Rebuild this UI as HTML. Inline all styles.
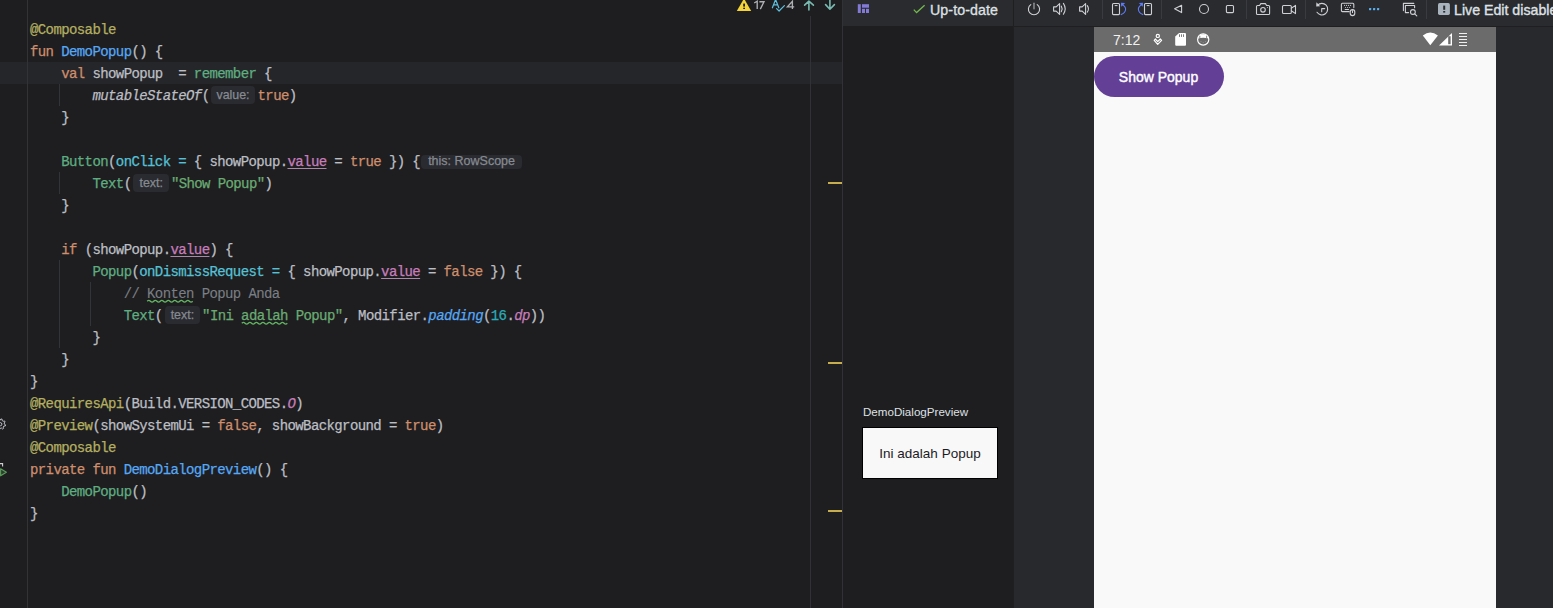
<!DOCTYPE html>
<html><head><meta charset="utf-8">
<style>
*{margin:0;padding:0;box-sizing:border-box}
html,body{width:1553px;height:608px;overflow:hidden;background:#1e1e20}
body{position:relative;font-family:"Liberation Sans",sans-serif}
.abs{position:absolute}
#editor{left:0;top:0;width:842px;height:608px;background:#1e1e20}
.ln{position:absolute;left:30px;height:22px;line-height:22px;font-family:"Liberation Mono",monospace;font-size:14px;letter-spacing:-0.6px;color:#bcbec4;white-space:pre;-webkit-text-stroke:0.25px currentColor}

.an{color:#b3ae60}
.kw{color:#cf8e6d}
.fd{color:#56a8f5}
.cf{color:#5fae82}
.it{font-style:italic}
.na{color:#56c1d6}
.pr{color:#c77dbb;text-decoration:underline;text-decoration-color:#a88aa8;text-underline-offset:2px;text-decoration-thickness:1px}
.st{color:#6aab73}
.cm{color:#7a7e85;-webkit-text-stroke:0.1px #7a7e85}
.nu{color:#2aacb8}
.pu{color:#c77dbb}
.hint{display:inline-block;vertical-align:top;margin-top:1px;height:18px;line-height:18px;border-radius:4px;background:#2a2b30;color:#868a91;font-family:"Liberation Sans",sans-serif;font-size:12.4px;letter-spacing:0;padding:0 5px;margin-left:2px;margin-right:3px}
.hint2{height:14px;line-height:13px;margin-top:4px;font-size:12.5px;padding:0 7px;margin-left:1px}
.wavy{text-decoration:underline wavy #5fa65f;text-underline-offset:3px;text-decoration-thickness:1px}
</style></head><body>
<div id="editor" class="abs">
  <!-- current line highlight -->
  <div class="abs" style="left:0;top:62px;width:842px;height:22px;background:#252629"></div>
  <!-- gutter line -->
  <div class="abs" style="left:27px;top:0;width:1px;height:608px;background:#313335"></div>
  <!-- right margin guide -->
  <div class="abs" style="left:810px;top:16px;width:1px;height:592px;background:#313236"></div>
  <div class="abs" style="left:842px;top:0;width:1px;height:608px;background:#313236"></div>
  <!-- indent guides -->
  <div class="abs" style="left:59px;top:84px;width:1px;height:22px;background:#313438"></div>
  <div class="abs" style="left:59px;top:172px;width:1px;height:22px;background:#313438"></div>
  <div class="abs" style="left:59px;top:260px;width:1px;height:88px;background:#313438"></div>
  <div class="abs" style="left:90px;top:282px;width:1px;height:44px;background:#313438"></div>
  <!-- markers -->
  <div class="abs" style="left:828px;top:182px;width:14px;height:2px;background:#c8ad4f"></div>
  <div class="abs" style="left:828px;top:362px;width:14px;height:2px;background:#c8ad4f"></div>
  <div class="abs" style="left:828px;top:510px;width:14px;height:2px;background:#c8ad4f"></div>

  <div class="ln" style="top:19px"><span class="an">@Composable</span></div>
  <div class="ln" style="top:41px"><span class="kw">fun</span> <span class="fd">DemoPopup</span>() {</div>
  <div class="ln" style="top:63px">    <span class="kw">val</span> showPopup  = <span class="cf">remember</span> {</div>
  <div class="ln" style="top:85px">        <span class="it">mutableStateOf</span>(<span class="hint">value:</span><span class="kw">true</span>)</div>
  <div class="ln" style="top:107px">    }</div>
  <div class="ln" style="top:151px">    <span class="cf">Button</span>(<span class="na">onClick =</span> { showPopup.<span class="pr">value</span> = <span class="kw">true</span> }) {<span class="hint hint2">this: RowScope</span></div>
  <div class="ln" style="top:173px">        <span class="cf">Text</span>(<span class="hint" style="padding:0 6px;margin-right:2px">text:</span><span class="st">"Show Popup"</span>)</div>
  <div class="ln" style="top:195px">    }</div>
  <div class="ln" style="top:239px">    <span class="kw">if</span> (showPopup.<span class="pr">value</span>) {</div>
  <div class="ln" style="top:261px">        <span class="cf">Popup</span>(<span class="na">onDismissRequest =</span> { showPopup.<span class="pr">value</span> = <span class="kw">false</span> }) {</div>
  <div class="ln" style="top:283px">            <span class="cm">// Konten Popup Anda</span></div>
  <div class="ln" style="top:305px">            <span class="cf">Text</span>(<span class="hint" style="padding:0 6px;margin-right:2px">text:</span><span class="st">"Ini adalah Popup"</span>, Modifier.<span class="fd it">padding</span>(<span class="nu">16</span>.<span class="pu it">dp</span>))</div>
  <div class="ln" style="top:327px">        }</div>
  <div class="ln" style="top:349px">    }</div>
  <div class="ln" style="top:371px">}</div>
  <div class="ln" style="top:393px"><span class="an">@RequiresApi</span>(Build.VERSION_CODES.<span class="pu it">O</span>)</div>
  <div class="ln" style="top:415px"><span class="an">@Preview</span>(showSystemUi = <span class="kw">false</span>, showBackground = <span class="kw">true</span>)</div>
  <div class="ln" style="top:437px"><span class="an">@Composable</span></div>
  <div class="ln" style="top:459px"><span class="kw">private fun</span> <span class="fd">DemoDialogPreview</span>() {</div>
  <div class="ln" style="top:481px">    <span class="cf">DemoPopup</span>()</div>
  <div class="ln" style="top:503px">}</div>
</div>

<!-- preview panel -->
<div class="abs" style="left:843px;top:0;width:171px;height:608px;background:#1e1e20"></div>
<div class="abs" style="left:843px;top:0;width:171px;height:27px;background:#2a2b2e;border-bottom:1px solid #1e1e20"></div>
<div class="abs" style="left:1013px;top:0;width:1px;height:608px;background:#1f1f21"></div>

<!-- running devices -->
<div class="abs" style="left:1014px;top:0;width:539px;height:608px;background:#28292c"></div>
<div class="abs" style="left:1014px;top:0;width:539px;height:27px;background:#2a2b2e;border-bottom:1px solid #1f1f21"></div>

<!-- phone -->
<div class="abs" style="left:1094px;top:27px;width:402px;height:581px;background:#f9f9f9"></div>
<div class="abs" style="left:1094px;top:27px;width:402px;height:25px;background:#6b6b6b"></div>
<div class="abs" style="left:1094px;top:56px;width:130px;height:41px;border-radius:21px;background:#634096"></div>
<div class="abs" style="left:1094px;top:57px;width:130px;height:41px;line-height:41px;text-align:center;color:#fff;font-size:14px;-webkit-text-stroke:0.4px #fff;padding-right:1px">Show Popup</div>
<div class="abs" style="left:1113px;top:30px;height:20px;line-height:20px;color:#f2f2f2;font-size:14px">7:12</div>

<!-- preview card -->
<div class="abs" style="left:863px;top:405px;font-size:11.6px;color:#dfe1e5;line-height:14px">DemoDialogPreview</div>
<div class="abs" style="left:862px;top:427px;width:136px;height:52px;background:#f8f8f8;border:1px solid #000"></div>
<div class="abs" style="left:862px;top:428px;width:136px;height:52px;line-height:52px;text-align:center;font-size:13.5px;color:#1c1b1f">Ini adalah Popup</div>

<!-- toolbar text -->
<div class="abs" style="left:930px;top:0.5px;height:18px;line-height:18px;font-size:14.2px;-webkit-text-stroke:0.3px #dfe1e5;letter-spacing:0.1px;color:#dfe1e5">Up-to-date</div>
<div class="abs" style="left:1454px;top:0.5px;height:18px;line-height:18px;font-size:14.2px;-webkit-text-stroke:0.35px #dfe1e5;color:#dfe1e5;white-space:nowrap">Live Edit disable</div>

<!-- editor top-right -->


<svg class="abs" style="left:0;top:0" width="1553" height="608" viewBox="0 0 1553 608">
 <g fill="none" stroke="#ced0d6" stroke-width="1.1" stroke-linecap="round" stroke-linejoin="round">
  <!-- power -->
  <path d="M1030.8,4.6 A5.6,5.6 0 1 0 1037.2,4.6"/>
  <path d="M1034,3.2 V8.8" stroke="#9a9ca0" stroke-width="1.3"/>
  <!-- volume up -->
  <path d="M1053.6,6.9 H1056.2 L1059.6,3.6 V14.4 L1056.2,11.1 H1053.6 Z"/>
  <path d="M1061.3,6.1 Q1063,8.9 1061.3,11.7"/>
  <path d="M1063.4,3.4 Q1067,8.9 1063.4,14.2"/>
  <!-- volume down -->
  <path d="M1079.6,6.9 H1082.2 L1085.6,3.6 V14.4 L1082.2,11.1 H1079.6 Z"/>
  <path d="M1087.3,5.6 Q1089.6,8.9 1087.3,12.1"/>
  <!-- rotate left -->
  <rect x="1112.5" y="3.5" width="7" height="11.1" rx="1"/>
  <path d="M1115.1,5.6 H1117.1" stroke-width="1"/>
  <path d="M1121.6,4.2 Q1126,6.5 1125.6,9.5 Q1125.2,12.8 1121.2,14.6" stroke="#5c7cfa"/>
  <!-- rotate right -->
  <rect x="1144.5" y="3.5" width="7" height="11.1" rx="1"/>
  <path d="M1147.1,5.6 H1149.1" stroke-width="1"/>
  <path d="M1142.4,4.2 Q1138,6.5 1138.4,9.5 Q1138.8,12.8 1142.8,14.6" stroke="#5c7cfa"/>
  <!-- back -->
  <path d="M1174.6,8.8 L1181.6,5.2 V12.6 Z"/>
  <!-- home -->
  <circle cx="1204" cy="9" r="4.5"/>
  <!-- overview -->
  <rect x="1226.4" y="5.5" width="7.1" height="7.1" rx="1"/>
  <!-- camera -->
  <path d="M1256.5,6.6 Q1256.5,5.5 1257.6,5.5 H1259.6 L1260.8,3.6 H1265.4 L1266.6,5.5 H1268.6 Q1269.6,5.5 1269.6,6.6 V13.4 Q1269.6,14.5 1268.6,14.5 H1257.6 Q1256.5,14.5 1256.5,13.4 Z"/>
  <circle cx="1263" cy="9.8" r="2.3"/>
  <!-- video -->
  <rect x="1282.5" y="5.5" width="8.8" height="8" rx="1"/>
  <path d="M1291.3,8.2 L1295.5,5.4 V13.6 L1291.3,10.8"/>
  <!-- history -->
  <path d="M1317.6,5.2 A5.8,5.8 0 1 1 1317,12.3"/>
  <path d="M1321.7,11.8 V8.6 H1324.7"/>
  <!-- keyboard+mouse -->
  <path d="M1349.2,11.6 H1342.4 Q1341.4,11.6 1341.4,10.6 V4.3 Q1341.4,3.3 1342.4,3.3 H1352.8 Q1353.8,3.3 1353.8,4.3 V7.6"/>
  <path d="M1345.2,9.5 H1348.6"/>
  <rect x="1350.2" y="9.6" width="4.6" height="6" rx="2.3"/>
  <path d="M1352.5,10.6 V12.6" stroke-width="1"/>
  <!-- window search -->
  <path d="M1403.4,10.6 V3.4 H1413.8"/>
  <path d="M1408.6,12.6 H1405.4 V5.5 H1414.6 V7.8"/>
  <circle cx="1412.9" cy="12" r="2.4"/>
  <path d="M1414.7,13.9 L1416.8,15.9"/>
 </g>
 <g fill="#ced0d6">
  <circle cx="1344.6" cy="5.4" r="0.55"/><circle cx="1346.6" cy="5.4" r="0.55"/><circle cx="1348.6" cy="5.4" r="0.55"/><circle cx="1350.6" cy="5.4" r="0.55"/>
  <circle cx="1345.6" cy="7.5" r="0.55"/><circle cx="1347.6" cy="7.5" r="0.55"/><circle cx="1349.6" cy="7.5" r="0.55"/>
  <circle cx="1267.4" cy="7.4" r="0.5"/>
  <path d="M1316.4,2.3 L1320.2,6.2 L1316.2,6.6 Z"/>
 </g>
 <g fill="#5c7cfa">
  <path d="M1121,2.8 L1125.2,2.9 L1121.2,6.8 Z"/>
  <path d="M1143,2.8 L1138.8,2.9 L1142.8,6.8 Z"/>
 </g>
 <!-- dots -->
 <g fill="#5ab0f5"><rect x="1369" y="8" width="2.2" height="2.2" rx="0.6"/><rect x="1373" y="8" width="2.2" height="2.2" rx="0.6"/><rect x="1377" y="8" width="2.2" height="2.2" rx="0.6"/></g>
 <!-- separators -->
 <g fill="#393b40"><rect x="1102" y="0" width="1" height="19"/><rect x="1161" y="0" width="1" height="19"/><rect x="1246" y="0" width="1" height="19"/><rect x="1305" y="0" width="1" height="19"/><rect x="1426" y="0" width="1" height="19"/></g>
 <!-- live edit warning box -->
 <rect x="1438" y="3.1" width="11.9" height="11.8" rx="1.6" fill="#a9b3bd"/>
 <rect x="1443.2" y="5.6" width="2" height="4.2" fill="#2b2d30"/>
 <rect x="1443.2" y="11" width="2" height="1.6" fill="#2b2d30"/>
 <!-- preview layout icon -->
 <g fill="#8379d6"><rect x="857.8" y="4.2" width="3" height="8.8"/><rect x="862" y="4.2" width="7" height="3.5"/><rect x="862" y="8.8" width="3" height="4.2"/><rect x="866" y="8.8" width="3" height="4.2"/></g>
 <!-- up-to-date check -->
 <path d="M913.8,9.6 L916.6,12.6 L924.6,5.2" fill="none" stroke="#73b84f" stroke-width="1.3"/>
 <!-- editor warnings -->
 <path d="M744,-1.5 L751.2,11 H736.8 Z" fill="#f2d43a"/>
 <rect x="743.2" y="3.6" width="1.8" height="3" fill="#1e1f22"/>
 <rect x="743.2" y="7.7" width="1.8" height="1.3" fill="#1e1f22"/>
 <g fill="none" stroke="#5ec0de" stroke-width="1.2" stroke-linecap="round" stroke-linejoin="round">
  <path d="M772.4,7.8 L775.6,-0.5 L778.8,7.8 M773.6,4.8 H777.6"/>
  <path d="M776.6,8.6 L779.1,11 L784.4,5.6"/>
 </g>
 <g fill="none" stroke="#78b9b0" stroke-width="1.6" stroke-linecap="round" stroke-linejoin="round">
  <path d="M808.9,10 V1.6 M804.6,5.2 L808.9,1.2 L813.4,5.2"/>
  <path d="M829.9,-1 V9 M825.6,4.6 L829.9,9.2 L834.4,4.6"/>
 </g>
 <!-- status bar icons -->
 <g fill="none" stroke="#ffffff" stroke-width="1.2" stroke-linejoin="round">
  <circle cx="1157.8" cy="35.9" r="1.6"/>
  <path d="M1154.2,40.3 L1157.7,44.4 L1161.6,40.3 L1160.3,39 L1157.7,41.6 L1155.4,39 Z"/>
  <circle cx="1203.2" cy="39.5" r="5.6"/>
 </g>
 <path d="M1175.2,36.6 L1179.1,32.9 H1185 Q1186,32.9 1186,33.9 V44.8 Q1186,45.8 1185,45.8 H1176.2 Q1175.2,45.8 1175.2,44.8 Z" fill="#ffffff"/>
 <g fill="#6b6b6b"><rect x="1179" y="34.3" width="0.9" height="2.6"/><rect x="1181" y="34.3" width="0.9" height="2.6"/><rect x="1183" y="34.3" width="0.9" height="2.6"/></g>
 <path d="M1197.9,38.4 A5.5,5.5 0 0 1 1208.5,38.4 Q1203.2,37.2 1197.9,38.4 Z" fill="#ffffff"/>
 <path d="M1199.8,35.8 V38.2 M1206.6,35.8 V38.2" stroke="#6b6b6b" stroke-width="0.8"/>
 <g fill="#9a9a9a"><circle cx="1201" cy="41.5" r="0.5"/><circle cx="1205.4" cy="41.5" r="0.5"/><circle cx="1203.2" cy="42.6" r="0.5"/></g>
 <!-- wifi -->
 <path d="M1422.8,35.6 Q1430.3,29.6 1437.9,35.6 L1430.3,45.2 Z" fill="#ffffff"/>
 <!-- signal -->
 <path d="M1439,45.6 L1452,32.9 V45.6 Z" fill="#ffffff"/>
 <rect x="1448.2" y="36.2" width="2.4" height="8" fill="#6b6b6b"/>
 <g fill="#ffffff"><rect x="1459" y="33" width="8" height="0.9"/><rect x="1459" y="36" width="8" height="0.9"/><rect x="1459" y="39" width="8" height="0.9"/><rect x="1459" y="42" width="8" height="0.9"/><rect x="1459" y="45" width="8" height="0.9"/></g>
 <!-- gutter icons -->
 <g fill="none" stroke="#ced0d6" stroke-width="1.1">
  <path d="M4.40,424.20 L5.56,424.82 L5.27,426.03 L3.95,426.06 L3.20,427.10 L3.58,428.36 L2.52,429.01 L1.57,428.10 L0.30,428.30 L-0.32,429.46 L-1.53,429.17 L-1.56,427.85 L-2.60,427.10 L-3.86,427.48 L-4.51,426.42 L-3.60,425.47 L-3.80,424.20 L-4.96,423.58 L-4.67,422.37 L-3.35,422.34 L-2.60,421.30 L-2.98,420.04 L-1.92,419.39 L-0.97,420.30 L0.30,420.10 L0.92,418.94 L2.13,419.23 L2.16,420.55 L3.20,421.30 L4.46,420.92 L5.11,421.98 L4.20,422.93 Z" stroke-width="0.9"/>
  <circle cx="0.3" cy="424.2" r="1.6" stroke-width="0.9"/>
  <path d="M0,463.6 H2.6 V466.6"/>
 </g>
 <path d="M0.6,468.8 L6.4,472.3 L0.6,475.8 Z" fill="#2e3b30" stroke="#5a9e5c" stroke-width="1.1" stroke-linejoin="round"/>
 <g fill="none" stroke="#aeb0b4" stroke-width="1.35" stroke-linejoin="miter">
  <path d="M754.2,3 L757.2,1.2 V9.1"/>
  <path d="M759.4,1.7 H764 L760.3,9.1"/>
  <path d="M792.4,9.1 V1.3 L787.4,6.9 H794.2"/>
 </g>
 <path d="M147.2,301.2 Q148.82,299.40 150.45,301.2 Q152.07,303.00 153.70,301.2 Q155.32,299.40 156.95,301.2 Q158.57,303.00 160.20,301.2 Q161.82,299.40 163.45,301.2 Q165.07,303.00 166.70,301.2 Q168.32,299.40 169.95,301.2 Q171.57,303.00 173.20,301.2 Q174.82,299.40 176.45,301.2 Q178.07,303.00 179.70,301.2 Q181.32,299.40 182.95,301.2 Q184.57,303.00 186.20,301.2 Q187.82,299.40 189.45,301.2 Q191.07,303.00 192.70,301.2" fill="none" stroke="#62b462" stroke-width="1.3"/>
 <path d="M241.8,323.2 Q243.43,321.40 245.05,323.2 Q246.68,325.00 248.30,323.2 Q249.93,321.40 251.55,323.2 Q253.18,325.00 254.80,323.2 Q256.43,321.40 258.05,323.2 Q259.68,325.00 261.30,323.2 Q262.93,321.40 264.55,323.2 Q266.18,325.00 267.80,323.2 Q269.43,321.40 271.05,323.2 Q272.68,325.00 274.30,323.2 Q275.93,321.40 277.55,323.2 Q279.18,325.00 280.80,323.2 Q282.43,321.40 284.05,323.2 Q285.68,325.00 287.30,323.2" fill="none" stroke="#62b462" stroke-width="1.3"/>
</svg>

</body></html>
